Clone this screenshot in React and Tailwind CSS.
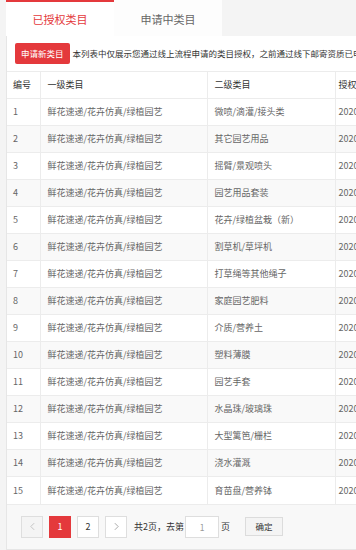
import { useState } from "react";

const rows = [
  "微喷/滴灌/接头类",
  "其它园艺用品",
  "摇臂/景观喷头",
  "园艺用品套装",
  "花卉/绿植盆栽（新）",
  "割草机/草坪机",
  "打草绳等其他绳子",
  "家庭园艺肥料",
  "介质/营养土",
  "塑料薄膜",
  "园艺手套",
  "水晶珠/玻璃珠",
  "大型篱笆/栅栏",
  "浇水灌溉",
  "育苗盘/营养钵",
];

export default function App() {
  const [tab, setTab] = useState(0);
  const font = { fontFamily: '"Noto Sans CJK SC", "Noto Sans", sans-serif' };

  return (
    <div className="min-h-[550px] w-[356px] overflow-hidden bg-[#f4f4f4] pl-[6px]" style={font}>
      <div className="flex h-[36px]">
        {["已授权类目", "申请中类目"].map((t, i) => (
          <button
            key={t}
            onClick={() => setTab(i)}
            className={
              "flex h-[36px] w-[108px] items-center justify-center border-t-2 text-[11px] " +
              (tab === i
                ? "border-[#e4393c] bg-white text-[#e4393c]"
                : "border-transparent bg-[#fdfdfd] text-[#666]")
            }
          >
            {t}
          </button>
        ))}
      </div>

      <div className="border-l border-b border-[#e6e6e6] bg-white">
        <div className="flex items-center gap-[3px] px-[8px] pt-[7px] pb-[7px]">
          <button className="h-[21px] shrink-0 rounded-[2px] bg-[#e4393c] px-[6px] text-[8.5px] leading-[21px] text-white">
            申请新类目
          </button>
          <span className="whitespace-nowrap text-[8.5px] text-[#333]">
            本列表中仅展示您通过线上流程申请的类目授权，之前通过线下邮寄资质已申请的类目不在此列表中展示
          </span>
        </div>

        <table className="w-[460px] table-fixed border-collapse text-[9px] text-[#666]">
          <colgroup>
            <col className="w-[33px]" />
            <col className="w-[167px]" />
            <col className="w-[128px]" />
            <col className="w-[132px]" />
          </colgroup>
          <thead>
            <tr className="h-[27px] border-t border-[#ececec] text-left text-[#333]">
              <th className="border-r border-[#ececec] pl-[6px] font-normal">编号</th>
              <th className="border-r border-[#ececec] pl-[7px] font-normal">一级类目</th>
              <th className="border-r border-[#ececec] pl-[7px] font-normal">二级类目</th>
              <th className="pl-[3px] font-normal">授权时间</th>
            </tr>
          </thead>
          <tbody>
            {rows.map((r, i) => (
              <tr
                key={i}
                className={"h-[27px] border-t border-[#ececec] " + (i % 2 === 1 ? "bg-[#f9f9f9]" : "bg-white")}
              >
                <td className="border-r border-[#ececec] pl-[6px]">{i + 1}</td>
                <td className="border-r border-[#ececec] pl-[7px] whitespace-nowrap">鲜花速递/花卉仿真/绿植园艺</td>
                <td className="border-r border-[#ececec] pl-[7px] whitespace-nowrap">{r}</td>
                <td className="pl-[3px] whitespace-nowrap">2020-11-12 15:32:10</td>
              </tr>
            ))}
          </tbody>
        </table>

        <div className="flex h-[45px] items-center border-t border-[#ececec] bg-[#f8f8f8] pl-[14px] text-[9px] text-[#333]">
          <button className="flex h-[22px] w-[22px] items-center justify-center border border-[#dedede] bg-[#f4f4f4] text-[#bbb]">
            <svg width="5" height="9" viewBox="0 0 6 10" fill="none" stroke="currentColor" strokeWidth="1">
              <path d="M5 1 1 5l4 4" />
            </svg>
          </button>
          <button className="ml-[6px] flex h-[22px] w-[22px] items-center justify-center bg-[#e4393c] text-white">1</button>
          <button className="ml-[6px] flex h-[22px] w-[22px] items-center justify-center border border-[#dedede] bg-white">2</button>
          <button className="ml-[6px] flex h-[22px] w-[22px] items-center justify-center border border-[#dedede] bg-white text-[#999]">
            <svg width="5" height="9" viewBox="0 0 6 10" fill="none" stroke="currentColor" strokeWidth="1">
              <path d="M1 1l4 4-4 4" />
            </svg>
          </button>
          <span className="ml-[7px]">共2页，去第</span>
          <input
            defaultValue="1"
            className="ml-[1px] h-[22px] w-[34px] border border-[#dedede] bg-white text-center text-[8.5px] text-[#999] outline-none"
          />
          <span className="ml-[2px]">页</span>
          <button className="ml-[15px] h-[19px] w-[38px] border border-[#dcdcdc] bg-[#f4f4f4] text-[8.5px] text-[#333]">
            确定
          </button>
        </div>
      </div>
    </div>
  );
}
